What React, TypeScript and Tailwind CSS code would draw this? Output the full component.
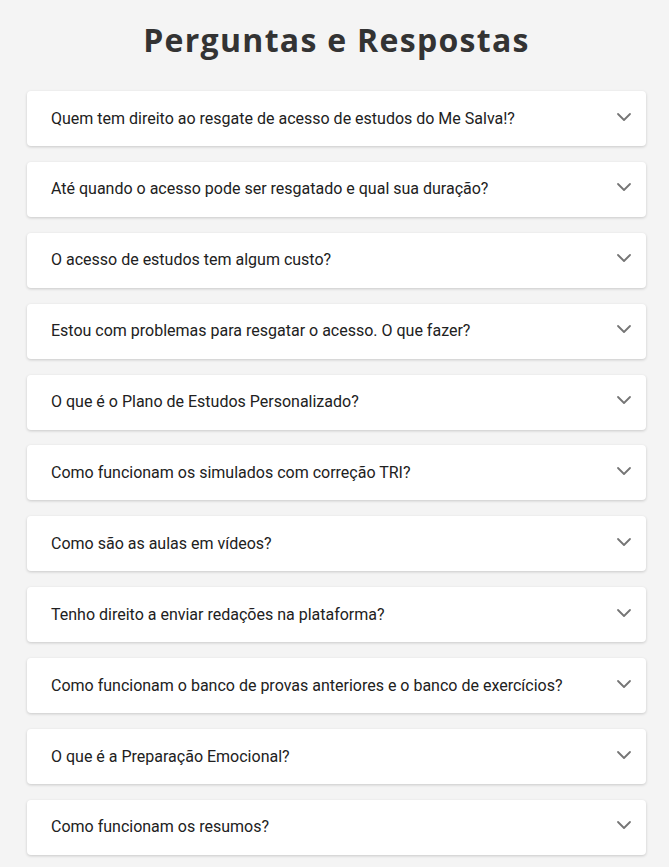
import { ChevronDown } from "lucide-react";

const QUESTIONS = [
  "Quem tem direito ao resgate de acesso de estudos do Me Salva!?",
  "Até quando o acesso pode ser resgatado e qual sua duração?",
  "O acesso de estudos tem algum custo?",
  "Estou com problemas para resgatar o acesso. O que fazer?",
  "O que é o Plano de Estudos Personalizado?",
  "Como funcionam os simulados com correção TRI?",
  "Como são as aulas em vídeos?",
  "Tenho direito a enviar redações na plataforma?",
  "Como funcionam o banco de provas anteriores e o banco de exercícios?",
  "O que é a Preparação Emocional?",
  "Como funcionam os resumos?",
];

export default function App() {
  return (
    <div className="min-h-screen bg-[#f4f4f4] pl-[27px] pr-[23px] pt-[19px] pb-6">
      <h1 className="text-center text-[32px] leading-[42px] font-bold text-[#333333] font-['Open_Sans',sans-serif] tracking-[1.3px]">
        Perguntas e Respostas
      </h1>
      <div className="mt-[30px] flex flex-col gap-[15.9px]">
        {QUESTIONS.map((q) => (
          <div
            key={q}
            className="flex h-[55px] items-center justify-between rounded bg-white pl-6 pr-[10px] shadow-[0_1px_3px_rgba(0,0,0,0.18)]"
          >
            <span className="font-['Roboto',sans-serif] text-base text-[#212121]">
              {q}
            </span>
            <ChevronDown className="mb-[4px] h-6 w-6 text-[#757575]" strokeWidth={1.8} />
          </div>
        ))}
      </div>
    </div>
  );
}
